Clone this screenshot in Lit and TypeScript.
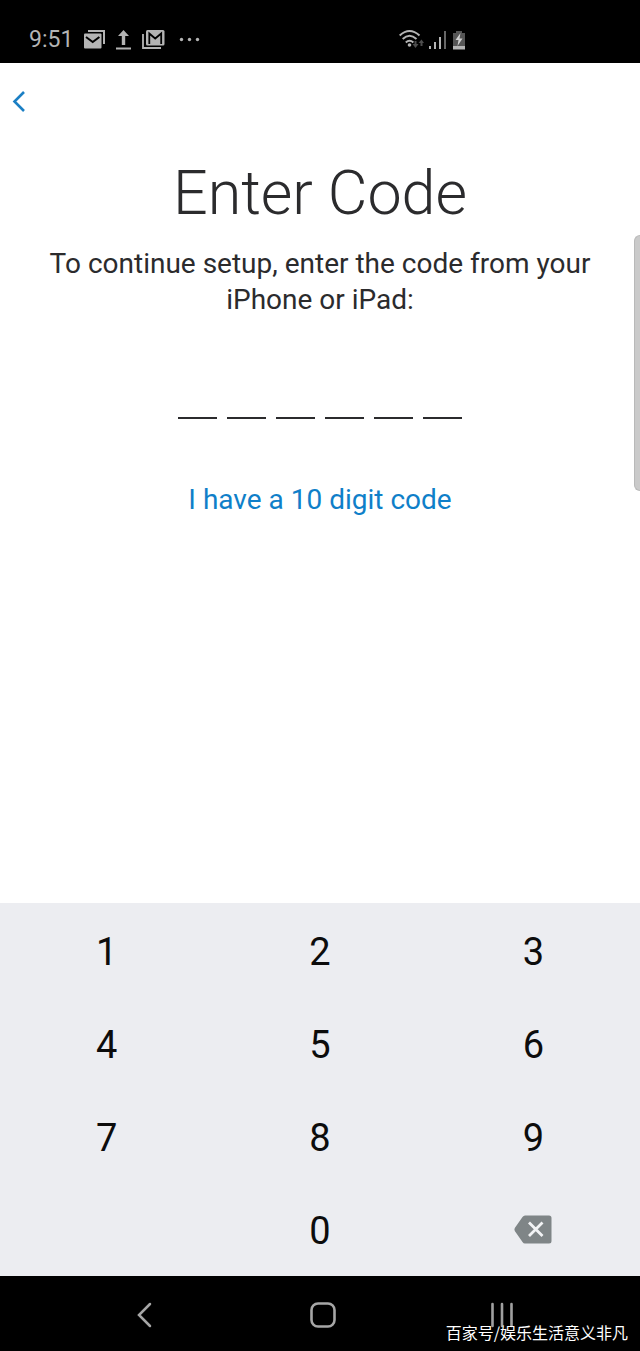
import { LitElement, html, css } from "lit";
import { customElement, state } from "lit/decorators.js";

@customElement("status-bar")
class StatusBar extends LitElement {
  static styles = css`
    :host {
      display: flex;
      align-items: center;
      height: 47px;
      padding: 16px 0 0 29px;
      background: #000;
      color: #b4b4b4;
      font: 23px/32px Roboto, sans-serif;
    }
    .left {
      display: flex;
      align-items: center;
      flex: 1;
      gap: 11px;
    }
    .right {
      display: flex;
      align-items: center;
      gap: 5px;
      width: 241px;
      flex: none;
    }
    svg {
      display: block;
      flex: none;
    }
  `;

  render() {
    return html`
      <div class="left">
        <time>9:51</time>
        <svg width="21" height="19" viewBox="0 0 21 19" aria-hidden="true">
          <path d="M4 1H20V14" fill="none" stroke="#b4b4b4" stroke-width="2" />
          <rect x="0" y="3.5" width="17.500" height="15" rx="1" fill="#b4b4b4" />
          <path d="M2 7l6.700 5 6.700-5" fill="none" stroke="#000" stroke-width="2" />
        </svg>
        <svg width="15" height="20" viewBox="0 0 15 20" aria-hidden="true">
          <path d="M7.500 0L13 6H9.200V15H5.800V6H2ZM0 17.500H15V19.500H0Z" fill="#b4b4b4" />
        </svg>
        <svg width="23" height="19" viewBox="0 0 23 19" aria-hidden="true">
          <path d="M1 4V18H19" fill="none" stroke="#b4b4b4" stroke-width="1.800" />
          <rect x="4" y="0" width="18.500" height="15.500" rx="1.500" fill="#b4b4b4" />
          <path d="M7.300 14V3.500L13.200 8.500 19.200 3.500V14" fill="none" stroke="#000" stroke-width="1.800" />
        </svg>
        <svg width="28" height="20" viewBox="0 0 28 20" aria-hidden="true">
          <g fill="#b4b4b4">
            <circle cx="5.500" cy="9.500" r="1.700" />
            <circle cx="13.500" cy="9.500" r="1.700" />
            <circle cx="21.500" cy="9.500" r="1.700" />
          </g>
        </svg>
      </div>
      <div class="right">
        <svg width="25" height="22" viewBox="0 0 25 22" aria-hidden="true">
          <g fill="none" stroke="#b4b4b4" stroke-width="2">
            <path d="M.7 6.500Q10.500-2.500 20.500 6.500" />
            <path d="M3.700 10Q10.500 3.500 17.500 10" />
            <path d="M6.800 13.500Q10.500 10 14.400 13.500" />
          </g>
          <circle cx="10.500" cy="16" r="1.800" fill="#b4b4b4" />
          <path d="M13.500 15H15.500V12H17.500V15H19.500L16.500 19ZM19.500 14H21.500V17H23.500V14H25L22.500 10.500Z" fill="#4c4c4c" />
        </svg>
        <svg width="18" height="20" viewBox="0 0 18 20" aria-hidden="true">
          <path d="M0 16H2V19H0ZM5 12H7V19H5ZM10 7H12V19H10Z" fill="#b4b4b4" />
          <path d="M15 1H17V19H15Z" fill="#666" />
        </svg>
        <svg width="14" height="20" viewBox="0 0 14 20" aria-hidden="true">
          <path d="M1 3H4V1H10V3H13V16H1Z" fill="#555" />
          <path d="M1 16H13V19.500H1Z" fill="#b4b4b4" />
          <path d="M8.500 3L3.500 10H6.500L5.500 16 10.500 8.500H7.500Z" fill="#d0d0d0" />
        </svg>
      </div>
    `;
  }
}

@customElement("number-pad")
class NumberPad extends LitElement {
  static styles = css`
    :host {
      display: grid;
      grid-template-columns: repeat(3, 1fr);
      grid-auto-rows: 93px;
      padding-top: 1px;
      background: #ecedf1;
    }
    button {
      display: flex;
      align-items: center;
      justify-content: center;
      margin: 0;
      padding: 0;
      border: 0;
      background: none;
      color: #0c0c0c;
      font: 38px/44px Roboto, sans-serif;
    }
    .digit {
      padding-top: 3px;
    }
    .zero {
      grid-column: 2;
    }
  `;

  private press(key: string) {
    this.dispatchEvent(new CustomEvent("key", { detail: key }));
  }

  render() {
    return html`
      ${["1", "2", "3", "4", "5", "6", "7", "8", "9", "0"].map(
        (digit) => html`<button
          class=${digit === "0" ? "digit zero" : "digit"}
          @click=${() => this.press(digit)}
        >${digit}</button>`
      )}
      <button aria-label="Delete" @click=${() => this.press("delete")}>
        <svg width="38" height="29" viewBox="0 0 38 29">
          <path
            d="M11 .5H35Q37.500 .5 37.500 3V26Q37.500 28.500 35 28.500H11Q9.500 28.500 8.500 27L.8 16Q0 14.500 .8 13L8.500 2Q9.500 .5 11 .5Z"
            fill="#7f8587"
          />
          <path d="M15 7.500L28.500 21M28.500 7.500L15 21" stroke="#f2f3f5" stroke-width="2.800" />
        </svg>
      </button>
    `;
  }
}

@customElement("nav-bar")
class NavBar extends LitElement {
  static styles = css`
    :host {
      display: block;
      position: relative;
      background: #000;
    }
    nav {
      display: flex;
      justify-content: center;
      height: 75px;
    }
    button {
      display: flex;
      align-items: center;
      justify-content: center;
      width: 28%;
      margin: 0;
      padding: 2px 0 0 6px;
      border: 0;
      background: none;
    }
    .watermark {
      position: absolute;
      right: 12px;
      bottom: 7px;
      color: #fff;
      font: 16px/24px "Noto Sans CJK SC", sans-serif;
      white-space: nowrap;
    }
  `;

  render() {
    return html`
      <nav aria-label="System">
        <button aria-label="Back">
          <svg width="16" height="26" viewBox="0 0 16 26">
            <path d="M14 2L3 13 14 24" fill="none" stroke="#a6a6a6" stroke-width="2.500" stroke-linecap="round" />
          </svg>
        </button>
        <button aria-label="Home">
          <svg width="28" height="28" viewBox="0 0 28 28">
            <rect x="2.500" y="2.500" width="23" height="23" rx="6.500" fill="none" stroke="#a6a6a6" stroke-width="2.600" />
          </svg>
        </button>
        <button aria-label="Recent apps">
          <svg width="24" height="26" viewBox="0 0 24 26">
            <path d="M2.500 2V24M12 2V24M21.500 2V24" stroke="#a0a0a0" stroke-width="2.600" stroke-linecap="round" />
          </svg>
        </button>
      </nav>
      <span class="watermark">百家号/娱乐生活意义非凡</span>
    `;
  }
}

@customElement("app-root")
class AppRoot extends LitElement {
  static styles = css`
    :host {
      display: flex;
      flex-direction: column;
      min-height: 100vh;
      background: #fff;
      color: #2b2b2d;
      font-family: Roboto, sans-serif;
    }
    main {
      position: relative;
      display: flex;
      flex-direction: column;
      align-items: center;
      flex: 1;
      text-align: center;
    }
    .back {
      align-self: flex-start;
      display: flex;
      margin: 0;
      padding: 26px 12px;
      border: 0;
      background: none;
    }
    h1 {
      margin: 18px 0 0;
      font-size: 61px;
      line-height: 72px;
      font-weight: 300;
    }
    p {
      margin: 17px 40px 0;
      font-size: 28px;
      line-height: 36px;
    }
    .code {
      display: flex;
      gap: 10px;
      margin: 0;
      padding: 51px 0 0;
      border: 0;
    }
    .cell {
      box-sizing: border-box;
      width: 39px;
      height: 50px;
      padding: 0;
      border: 0;
      border-bottom: 2px solid #2b2b2d;
      border-radius: 0;
      background: none;
      color: inherit;
      font: 36px/44px Roboto, sans-serif;
      text-align: center;
      outline: 0;
    }
    a {
      margin-top: 63px;
      color: #0f7fc9;
      font-size: 28px;
      line-height: 36px;
      text-decoration: none;
    }
    .edge-handle {
      position: absolute;
      top: 172px;
      right: 0;
      width: 5px;
      height: 254px;
      border: 1px solid #b9b9b9;
      border-right: 0;
      border-radius: 6px 0 0 6px;
      background: #cacaca;
    }
  `;

  @state() private code = "";

  private onKey(event: CustomEvent<string>) {
    this.code =
      event.detail === "delete" ? this.code.slice(0, -1) : (this.code + event.detail).slice(0, 6);
  }

  render() {
    return html`
      <status-bar></status-bar>
      <main>
        <button class="back" aria-label="Back">
          <svg width="14" height="24" viewBox="0 0 14 24">
            <path d="M12 3L2.500 12.500 12 22" fill="none" stroke="#1b7fc4" stroke-width="2.600" />
          </svg>
        </button>
        <h1>Enter Code</h1>
        <p>To continue setup, enter the code from your iPhone or iPad:</p>
        <fieldset class="code" aria-label="Verification code">
          ${[0, 1, 2, 3, 4, 5].map(
            (i) => html`<input
              class="cell"
              inputmode="numeric"
              maxlength="1"
              aria-label="Digit ${i + 1}"
              .value=${this.code[i] ?? ""}
            />`
          )}
        </fieldset>
        <a href="#long-code">I have a 10 digit code</a>
        <div class="edge-handle"></div>
      </main>
      <number-pad @key=${this.onKey}></number-pad>
      <nav-bar></nav-bar>
    `;
  }
}
